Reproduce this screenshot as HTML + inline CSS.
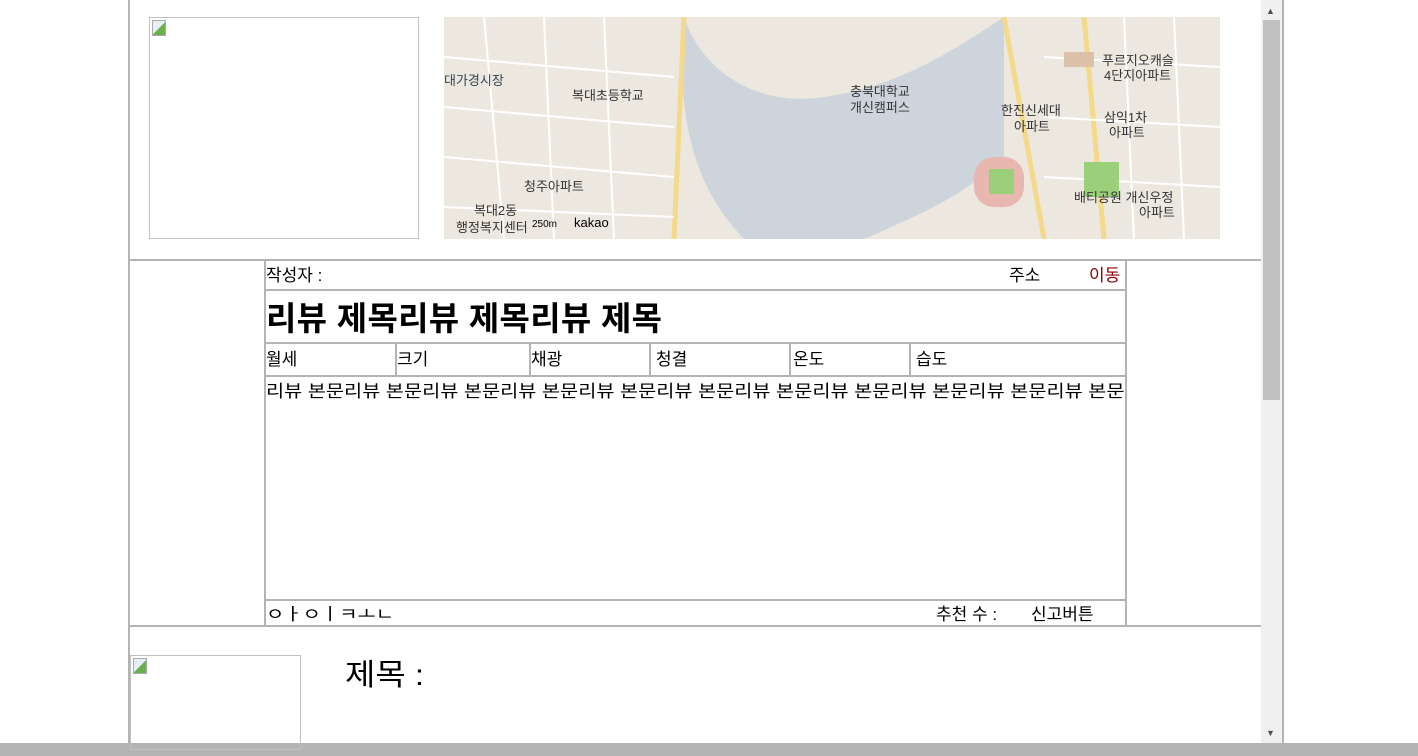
<!DOCTYPE html>
<html><head><meta charset="utf-8"><style>
body{margin:0;width:1418px;height:756px;overflow:hidden;background:#fff;font-family:"Liberation Sans","Noto Sans CJK KR",sans-serif;position:relative;color:#000}
.a{position:absolute;box-sizing:border-box}
.t{position:absolute;white-space:nowrap;font-size:17px;line-height:20px}
</style></head><body>
<div class="a" style="left:128px;top:0;width:2px;height:743px;background:#b4b4b4"></div>
<div class="a" style="left:1282px;top:0;width:2px;height:743px;background:#b4b4b4"></div>
<div class="a" style="left:1261px;top:0;width:21px;height:743px;background:#f0f0f0"></div>
<div class="a" style="left:1263px;top:20px;width:17px;height:380px;background:#c1c1c1"></div>
<div class="t" style="left:1266px;top:1px;font-size:9px;color:#505050">▲</div>
<div class="t" style="left:1266px;top:723px;font-size:9px;color:#505050">▼</div>
<div class="a" style="left:0;top:743px;width:1418px;height:13px;background:#b4b4b4"></div>

<div class="a" style="left:149px;top:17px;width:270px;height:222px;border:1px solid #c0c0c0"></div>
<div class="a" style="left:152px;top:20px;width:14px;height:16px;background:linear-gradient(135deg,#e8eef6 50%,#6ab04c 50%);border:1px solid #aaa"></div>
<div class="a" style="left:444px;top:17px;width:776px;height:222px;overflow:hidden;background:#ece8e0">
<svg width="776" height="222" style="position:absolute;left:0;top:0">
<path d="M240 0 C260 60 320 90 380 80 C450 70 500 40 560 0 L560 140 C520 180 470 200 420 222 L300 222 C260 180 230 120 240 0Z" fill="#cdd4dc"/>
<path d="M240 0 L230 222 M560 0 L600 222 M640 0 L660 222" stroke="#f4d98a" stroke-width="5" fill="none"/>
<g stroke="#fff" stroke-width="2" fill="none">
<path d="M0 40 L230 60 M0 90 L230 110 M0 140 L230 160 M0 190 L230 200 M40 0 L60 222 M100 0 L110 222 M160 0 L170 222 M600 40 L776 50 M600 100 L776 110 M600 160 L776 170 M680 0 L690 222 M730 0 L740 222"/>
</g>
<rect x="530" y="140" width="50" height="50" rx="20" fill="#e8b8b0"/>
<rect x="545" y="152" width="25" height="25" fill="#9bd07a"/>
<rect x="640" y="145" width="35" height="35" fill="#9bd07a"/>
<rect x="620" y="35" width="30" height="15" fill="#dcc0a8"/>
<text x="0" y="68" font-size="13" fill="#345">대가경시장</text>
<text x="128" y="83" font-size="13" fill="#333">복대초등학교</text>
<text x="80" y="174" font-size="13" fill="#333">청주아파트</text>
<text x="406" y="79" font-size="13" fill="#333">충북대학교</text>
<text x="406" y="95" font-size="13" fill="#333">개신캠퍼스</text>
<text x="557" y="98" font-size="13" fill="#333">한진신세대</text>
<text x="570" y="114" font-size="13" fill="#333">아파트</text>
<text x="658" y="48" font-size="13" fill="#333">푸르지오캐슬</text>
<text x="660" y="63" font-size="13" fill="#333">4단지아파트</text>
<text x="660" y="105" font-size="13" fill="#333">삼익1차</text>
<text x="665" y="120" font-size="13" fill="#333">아파트</text>
<text x="630" y="185" font-size="13" fill="#333">배티공원 개신우정</text>
<text x="695" y="200" font-size="13" fill="#333">아파트</text>
<text x="30" y="198" font-size="13" fill="#333">복대2동</text>
<text x="12" y="215" font-size="13" fill="#333">행정복지센터</text>
<text x="130" y="210" font-size="13" fill="#000">kakao</text>
<text x="88" y="210" font-size="10" fill="#000">250m</text>
</svg></div>

<div class="a" style="left:130px;top:259px;width:1131px;height:2px;background:#b4b4b4"></div>
<div class="a" style="left:264px;top:259px;width:863px;height:368px;border:2px solid #b4b4b4;border-top:0"></div>
<div class="a" style="left:266px;top:289px;width:859px;height:2px;background:#b4b4b4"></div>
<div class="a" style="left:266px;top:342px;width:859px;height:2px;background:#b4b4b4"></div>
<div class="a" style="left:266px;top:375px;width:859px;height:2px;background:#b4b4b4"></div>
<div class="a" style="left:266px;top:599px;width:859px;height:2px;background:#b4b4b4"></div>
<div class="a" style="left:395px;top:344px;width:2px;height:31px;background:#b4b4b4"></div>
<div class="a" style="left:529px;top:344px;width:2px;height:31px;background:#b4b4b4"></div>
<div class="a" style="left:649px;top:344px;width:2px;height:31px;background:#b4b4b4"></div>
<div class="a" style="left:789px;top:344px;width:2px;height:31px;background:#b4b4b4"></div>
<div class="a" style="left:909px;top:344px;width:2px;height:31px;background:#b4b4b4"></div>
<div class="t" style="left:266px;top:266px">작성자 :</div>
<div class="t" style="left:1009px;top:266px">주소</div>
<div class="t" style="left:1089px;top:266px;color:#8b0000">이동</div>
<div class="t" style="left:266px;top:299px;font-size:33px;line-height:40px;font-weight:bold;letter-spacing:0.3px">리뷰 제목리뷰 제목리뷰 제목</div>
<div class="t" style="left:266px;top:350px">월세</div>
<div class="t" style="left:397px;top:350px">크기</div>
<div class="t" style="left:531px;top:350px">채광</div>
<div class="t" style="left:656px;top:350px">청결</div>
<div class="t" style="left:793px;top:350px">온도</div>
<div class="t" style="left:916px;top:350px">습도</div>
<div class="a" style="left:266px;top:381px;width:859px;height:24px;overflow:hidden"><div class="t" style="left:0;top:1px;transform:scaleX(1.16);transform-origin:0 0">리뷰 본문리뷰 본문리뷰 본문리뷰 본문리뷰 본문리뷰 본문리뷰 본문리뷰 본문리뷰 본문리뷰 본문리뷰 본문</div></div>
<div class="t" style="left:266px;top:605px;transform:scaleX(1.17);transform-origin:0 0">ㅇㅏㅇㅣㅋㅗㄴ</div>
<div class="t" style="left:936px;top:605px">추천 수 :</div>
<div class="t" style="left:1031px;top:605px">신고버튼</div>
<div class="a" style="left:130px;top:625px;width:1131px;height:2px;background:#b4b4b4"></div>
<div class="a" style="left:130px;top:655px;width:171px;height:95px;border:1px solid #c0c0c0"></div>
<div class="a" style="left:133px;top:658px;width:14px;height:16px;background:linear-gradient(135deg,#e8eef6 50%,#6ab04c 50%);border:1px solid #aaa"></div>
<div class="t" style="left:345px;top:658px;font-size:30px;line-height:36px;transform:scaleX(1.1);transform-origin:0 0">제목 :</div>
</body></html>
